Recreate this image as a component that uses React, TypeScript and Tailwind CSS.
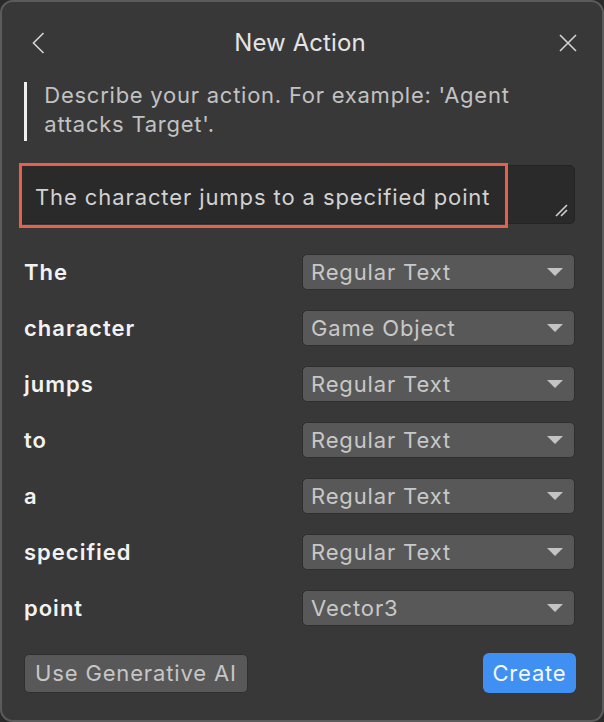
import React from "react";

const rows: { label: string; type: string }[] = [
  { label: "The", type: "Regular Text" },
  { label: "character", type: "Game Object" },
  { label: "jumps", type: "Regular Text" },
  { label: "to", type: "Regular Text" },
  { label: "a", type: "Regular Text" },
  { label: "specified", type: "Regular Text" },
  { label: "point", type: "Vector3" },
];

function Dropdown({ value }: { value: string }) {
  return (
    <div className="w-[273px] h-[36px] rounded-[5px] bg-[#585858] border border-[#2f2f2f] flex items-center pl-[8px] pr-[11px]">
      <span className="flex-1 text-[22px] leading-none text-[#c8c8c8] tracking-[0.85px]">{value}</span>
      <svg width="16" height="8" viewBox="0 0 16 8">
        <path d="M0 0 H16 L8 8 Z" fill="#c4c4c4" />
      </svg>
    </div>
  );
}

export default function App() {
  return (
    <div className="w-[604px] h-[722px] bg-[#2a2a2a]" style={{ fontFamily: "Inter, 'Noto Sans', sans-serif" }}>
      <div className="relative w-full h-full rounded-[13px] bg-[#383838] shadow-[inset_0_0_0_2px_#5b5b5b] flex flex-col pl-[19px] pr-[29px]">
        {/* header */}
        <div className="h-[82px] flex items-center justify-between pt-[3px]">
          <svg width="13" height="22" viewBox="0 0 13 22" className="ml-[13px]">
            <path d="M11.5 1 L1.5 11 L11.5 21" stroke="#d4d4d4" strokeWidth="1.6" fill="none" />
          </svg>
          <div className="text-[24px] leading-none text-[#e4e4e4] ml-[-4px] tracking-[0.1px]">New Action</div>
          <svg width="18" height="18" viewBox="0 0 18 18" className="mr-[-2px]">
            <path d="M1 1 L17 17 M17 1 L1 17" stroke="#d4d4d4" strokeWidth="1.6" fill="none" />
          </svg>
        </div>
        {/* description */}
        <div className="flex ml-[5px]">
          <div className="w-[4px] h-[59px] bg-[#f0f0f0]" />
          <div className="pl-[17px] text-[22px] leading-[29px] text-[#c2c2c2] -mt-[1px] tracking-[0.75px]">
            Describe your action. For example: 'Agent attacks Target'.
          </div>
        </div>
        {/* textarea */}
        <div className="relative mt-[24px] h-[59px] rounded-[5px] bg-[#2a2a2a] border border-[#232323] flex items-center pl-[15px]">
          <span className="text-[22px] leading-none text-[#d2d2d2] mt-[4px] tracking-[0.9px]">The character jumps to a specified point</span>
          <svg width="14" height="14" viewBox="0 0 14 14" className="absolute right-[6px] bottom-[6px]">
            <path d="M2 13 L13 2 M7 13 L13 7" stroke="#d0d0d0" strokeWidth="1.6" fill="none" />
          </svg>
          <div className="absolute -left-[1px] -top-[3px] w-[489px] h-[65px] border-[3px] border-[#e8604c] pointer-events-none" />
        </div>
        {/* rows */}
        <div className="flex flex-col gap-[20px] mt-[30px]">
          {rows.map((r) => (
            <div key={r.label} className="flex items-center justify-between">
              <span className="ml-[5px] text-[22px] leading-none font-semibold text-[#f2f2f2] tracking-[1px]">{r.label}</span>
              <Dropdown value={r.type} />
            </div>
          ))}
        </div>
        {/* footer */}
        <div className="flex items-center justify-between mt-[27px] pr-0">
          <div className="ml-[5px] h-[39px] px-[10px] rounded-[5px] bg-[#585858] border border-[#2f2f2f] flex items-center">
            <span className="text-[22px] leading-none text-[#c6c6c6] tracking-[0.85px]">Use Generative AI</span>
          </div>
          <div className="h-[40px] w-[93px] mr-[-1px] rounded-[6px] bg-[#3f90f2] flex items-center justify-center">
            <span className="text-[22px] leading-none text-[#f4f8ff] tracking-[0.8px]">Create</span>
          </div>
        </div>
      </div>
    </div>
  );
}
